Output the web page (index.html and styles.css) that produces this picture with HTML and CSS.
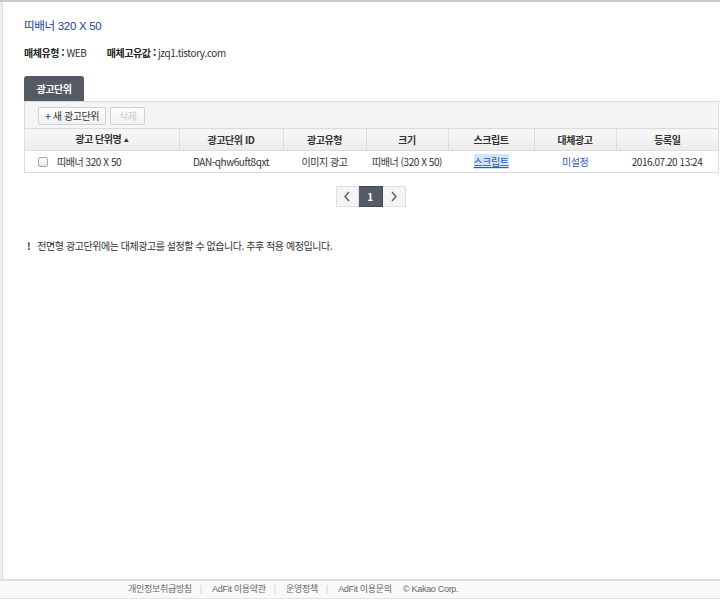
FILE: index.html
```html
<!DOCTYPE html>
<html lang="ko">
<head>
  <meta charset="UTF-8" />
  <title>광고단위</title>
  <link rel="stylesheet" href="styles.css">
</head>
<body>
<div class="page">
  <div class="main">
    <div class="content">
      <div class="title">띠배너 320 X 50</div>
      <div class="info">
        <span><b>매체유형 :</b> WEB</span>
        <span class="info-gap"><b>매체고유값 :</b> jzq1.tistory.com</span>
      </div>

      <div class="tab">광고단위</div>
      <div class="unit-box">
        <div class="toolbar">
          <button class="btn"><span class="plus">+</span> 새 광고단위</button>
          <button class="btn disabled">삭제</button>
        </div>
        <table class="units">
          <colgroup>
            <col style="width:154px"><col style="width:104px"><col style="width:83px">
            <col style="width:82px"><col style="width:86px"><col style="width:82px"><col>
          </colgroup>
          <thead>
            <tr>
              <th>광고 단위명 <span class="sort">▲</span></th>
              <th>광고단위 ID</th>
              <th>광고유형</th>
              <th>크기</th>
              <th>스크립트</th>
              <th>대체광고</th>
              <th>등록일</th>
            </tr>
          </thead>
          <tbody>
            <tr>
              <td class="name"><span class="check"></span>띠배너 320 X 50</td>
              <td>DAN-qhw6uft8qxt</td>
              <td>이미지 광고</td>
              <td>띠배너 (320 X 50)</td>
              <td><span class="script-link">스크립트</span></td>
              <td><span class="link">미설정</span></td>
              <td>2016.07.20 13:24</td>
            </tr>
          </tbody>
        </table>
      </div>

      <div class="paging">
        <span class="pg">
          <svg width="8" height="11" viewBox="0 0 8 11"><path d="M6 1 L2 5.5 L6 10" fill="none" stroke="#555" stroke-width="1.3"/></svg>
        </span>
        <span class="pg on">1</span>
        <span class="pg">
          <svg width="8" height="11" viewBox="0 0 8 11"><path d="M2 1 L6 5.5 L2 10" fill="none" stroke="#555" stroke-width="1.3"/></svg>
        </span>
      </div>

      <div class="note"><span class="note-mark">!</span>전면형 광고단위에는 대체광고를 설정할 수 없습니다. 추후 적용 예정입니다.</div>
    </div>
  </div>

  <div class="footer">
    <span>개인정보취급방침</span><span class="bar">|</span>
    <span>AdFit 이용약관</span><span class="bar">|</span>
    <span>운영정책</span><span class="bar">|</span>
    <span>AdFit 이용문의</span>
    <span class="copy">© Kakao Corp.</span>
  </div>
</div>
</body>
</html>
```

FILE: styles.css
```css
html, body {
  margin: 0;
  height: 100%;
}

body {
  font-family: "Noto Sans CJK KR", "Liberation Sans", sans-serif;
  font-size: 10px;
  letter-spacing: -0.45px;
  color: #333;
  background: #fff;
}

.page {
  display: flex;
  flex-direction: column;
  height: 603px;
  border-top: 2px solid #c9c9c9;
  box-sizing: border-box;
}

.main {
  flex: 1;
  border-left: 2px solid #f0f0f0;
}

.content {
  border-left: 1px solid #dcdcdc;
  height: 100%;
  box-sizing: border-box;
  padding: 16px 1px 0 21px;
}

.title {
  font-family: "Liberation Sans", "Noto Sans CJK KR", sans-serif;
  font-size: 11.5px;
  letter-spacing: -0.3px;
  line-height: 16px;
  color: #1d3f8e;
}

.info {
  margin-top: 11px;
  line-height: 16px;
  color: #333;
}

.info b {
  color: #222;
}

.info-gap {
  margin-left: 18px;
}

.tab {
  margin-top: 15px;
  width: 60px;
  height: 25px;
  line-height: 25px;
  text-align: center;
  background: #555b66;
  color: #fff;
  font-weight: bold;
  border-radius: 3px 3px 0 0;
}

.unit-box {
  border: 1px solid #dcdcdc;
}

.toolbar {
  background: #f5f5f5;
  height: 26px;
  padding: 5px 0 0 13px;
  box-sizing: border-box;
  display: flex;
  gap: 4px;
}

.btn {
  height: 18px;
  padding: 0 6px;
  font-family: inherit;
  font-size: 10px;
  letter-spacing: -0.45px;
  line-height: 16px;
  color: #333;
  background: linear-gradient(#fff, #f0f0f0);
  border: 1px solid #d2d2d2;
  border-radius: 2px;
}

.btn .plus {
  color: #2d6cc7;
  font-weight: bold;
}

.btn.disabled {
  color: #ccc;
  padding: 0 8px;
}

.units {
  width: 100%;
  border-collapse: collapse;
  table-layout: fixed;
}

.units th {
  height: 21px;
  padding: 0;
  line-height: 14px;
  font-weight: bold;
  color: #333;
  background: linear-gradient(#f8f8f8, #ececec);
  border-top: 1px solid #dcdcdc;
  border-bottom: 1px solid #dcdcdc;
  border-left: 1px solid #dcdcdc;
}

.units th:first-child,
.units td:first-child {
  border-left: none;
}

.units td {
  height: 21px;
  padding: 0;
  line-height: 14px;
  text-align: center;
  color: #333;
}

.units td.name {
  text-align: left;
  padding-left: 13px;
}

.sort {
  font-size: 5px;
  vertical-align: middle;
}

.check {
  display: inline-block;
  width: 8px;
  height: 8px;
  border: 1px solid #a9a9a9;
  border-radius: 2px;
  background: linear-gradient(#fff, #e6e6e6);
  vertical-align: -1px;
  margin-right: 9px;
}

.script-link {
  color: #2a5fb8;
  text-decoration: underline;
  background: #d3e3f8;
}

.link {
  color: #2a5fb8;
}

.paging {
  margin-top: 13px;
  display: flex;
  justify-content: center;
  padding-right: 2px;
}

.pg {
  width: 23px;
  height: 21px;
  box-sizing: border-box;
  display: flex;
  align-items: center;
  justify-content: center;
  border: 1px solid #e0e0e0;
  background: #f4f4f4;
}

.pg + .pg {
  border-left: none;
}

.pg.on {
  width: 24px;
  background: #555b66;
  border-color: #444a54;
  color: #fff;
  font-weight: bold;
}

.note {
  margin-top: 31px;
  line-height: 16px;
  padding-left: 3px;
  color: #333;
}

.note-mark {
  font-weight: bold;
  margin-right: 7px;
}

.footer {
  height: 17px;
  line-height: 17px;
  background: #f9f9f9;
  border-top: 2px solid #dedede;
  border-bottom: 1px solid #e3e3e3;
  margin-bottom: 4px;
  padding-left: 128px;
  font-family: "Liberation Sans", "Noto Sans CJK KR", sans-serif;
  letter-spacing: -0.3px;
  color: #666;
  font-size: 9px;
}

.footer .bar {
  color: #d0d0d0;
  margin: 0 8px;
}

.footer .copy {
  margin-left: 9px;
}
```
